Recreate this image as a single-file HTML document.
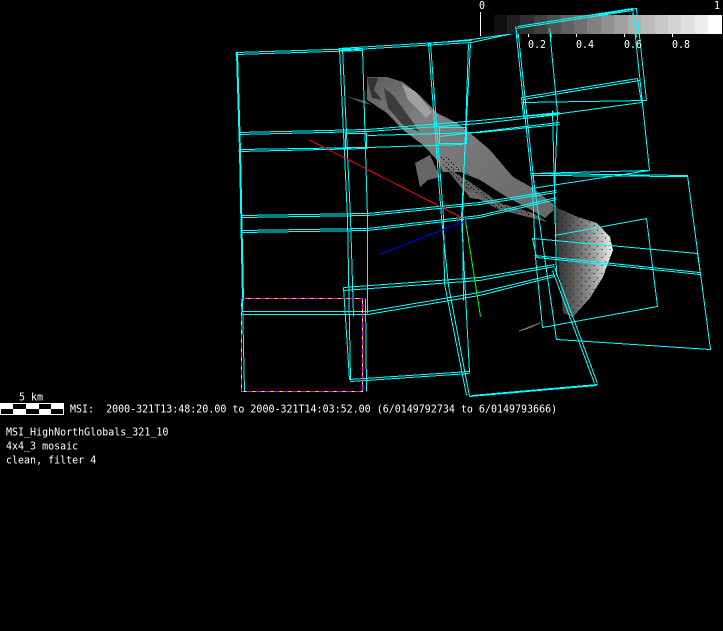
<!DOCTYPE html>
<html>
<head>
<meta charset="utf-8">
<style>
html,body{margin:0;padding:0;background:#000;width:723px;height:631px;overflow:hidden}
svg{display:block}
text{font-family:"DejaVu Sans Mono","Liberation Mono",monospace;font-size:10px;fill:#fff;white-space:pre}
</style>
</head>
<body>
<svg width="723" height="631" viewBox="0 0 723 631" xmlns="http://www.w3.org/2000/svg">
<defs>
<linearGradient id="b1" x1="0" y1="0" x2="1" y2="1">
<stop offset="0" stop-color="#5c5c5c"/><stop offset=".3" stop-color="#808080"/><stop offset=".6" stop-color="#747474"/><stop offset="1" stop-color="#666"/>
</linearGradient>
<linearGradient id="b2" x1="0" y1="0" x2="1" y2="0">
<stop offset="0" stop-color="#2a2a2a"/><stop offset=".3" stop-color="#555"/><stop offset=".6" stop-color="#8c8c8c"/><stop offset=".85" stop-color="#c8c8c8"/><stop offset="1" stop-color="#f4f4f4"/>
</linearGradient>
<pattern id="dots" width="8" height="8" patternUnits="userSpaceOnUse">
<rect x="1" y="1" width="2" height="1" fill="#000" fill-opacity=".45"/><rect x="5" y="5" width="1" height="2" fill="#000" fill-opacity=".45"/>
</pattern>
<pattern id="spk" width="5" height="5" patternUnits="userSpaceOnUse">
<rect x="1" y="2" width="1" height="1" fill="#000"/><rect x="3" y="4" width="1" height="1" fill="#000"/>
</pattern>
</defs>

<!-- asteroid -->
<g shape-rendering="crispEdges">
<path d="M367 77L387 77L403 82L417 93L437 113L457 123L470 133L490 150L513 177L533 188L557 207L545 218L533 211L505 196L480 180L460 172L443 172L437 160L423 145L403 130L387 113L367 100Z" fill="url(#b1)"/>
<path d="M443 165L470 182L500 203L533 213L548 222L500 210L465 192Z" fill="#5e5e5e"/>
<path d="M437 150L447 172L465 190L500 210L533 216L505 196L470 175Z" fill="url(#spk)"/>
<path d="M367 78L378 78L374 90L382 100L372 98Z" fill="#333"/>
<path d="M384 88L394 96L420 132L404 126L388 108Z" fill="#3c3c3c"/>
<path d="M402 84L416 92L432 112L426 118L408 100Z" fill="#a0a0a0"/>
<path d="M415 163L430 155L440 177L428 180L420 187Z" fill="#666"/>
<path d="M463 188L478 194L485 200L470 198Z" fill="#666"/>
<path d="M346 96L365 101L372 105L360 102Z" fill="#555"/>
<path d="M553 206L578 217L597 223L610 237L613 250L603 277L590 298L573 317L563 313L557 247Z" fill="url(#b2)"/>
<path d="M553 206L578 217L597 223L610 237L613 250L603 277L590 298L573 317L563 313L557 247Z" fill="url(#dots)"/>
<path d="M519 331L540 323L529 328Z" fill="#777" stroke="#777"/>
</g>

<!-- frames -->
<g transform="translate(-.5,.5)">
<g fill="none" stroke="#00ffff" stroke-width="1" shape-rendering="crispEdges">
<!-- top edges -->
<path d="M236 52L363 48M236 54L363 50M339 48L472 40M339 50L472 42M429 43L472 39L550 28M472 42L518 32"/>
<!-- band 2 -->
<path d="M239 132L368 129L480 120L560 112M239 134L368 131L480 123L560 114"/>
<path d="M239 149L368 147L463 144M239 151L368 148M368 135L480 132L560 124M440 136L560 122"/>
<!-- overlap boxes -->
<path d="M346 133H367V147H346ZM440 127H467V143H440Z"/>
<!-- band 3 -->
<path d="M242 215L368 213L480 202L557 190M242 217L368 215L480 204L557 192"/>
<path d="M242 230L368 228L480 215L557 197M242 232L368 230L480 217L557 199"/>
<!-- band 5 -->
<path d="M243 311L368 311L480 292L555 274M243 314L368 314L480 295L555 276"/>
<path d="M344 287L480 277L555 264M344 290L480 280L555 266"/>
<path d="M350 379L470 371M351 381L470 373"/>
<!-- verticals -->
<path d="M237 52L240 150L243 300L245 391M238 52L241 150L244 300"/>
<path d="M340 48L348 217L351 380M343 48L351 217L354 316"/>
<path d="M363 48L368 217L368 313M366 298L367 391"/>
<path d="M344 287L350 379"/>
<path d="M429 43L442 217L449 285L470 396M431 43L444 217L445 283L467 395"/>
<path d="M471 43L462 217L470 372M469 43L463 217L464 300"/>
<path d="M516 26L533 187L536 257L543 327M518 26L535 187"/>
<path d="M550 28L558 113L555 190L557 275M553 110L557 275"/>
<path d="M555 267L598 383M553 270L595 383M472 395L598 384M470 396L597 385"/>
<!-- top-right frames -->
<path d="M516 26L633 8L650 170M518 28L637 8L647 100"/>
<path d="M522 97L638 78L642 102M522 97L524 116L525 118L642 102M522 102L647 100M524 99L640 80"/>
<path d="M532 173L650 170M532 188L650 170M525 116L558 113"/>
<path d="M532 173L688 175L711 349L557 339L533 173M534 175L688 176"/>
<path d="M533 238L698 253M535 255L700 272M537 257L701 274M533 238L537 257M698 253L701 274"/>
<path d="M647 218L658 306L543 327M647 218L555 235"/>
</g>

<!-- selected image -->
<rect x="242" y="298" width="121" height="93" fill="none" stroke="#ffff00" shape-rendering="crispEdges"/>
<rect x="242" y="298" width="121" height="93" fill="none" stroke="#ff00ff" stroke-dasharray="6 3" shape-rendering="crispEdges"/>

<!-- axes -->
<g fill="none" stroke-width="1" shape-rendering="crispEdges">
<path d="M309 139L466 219" stroke="#ff0000"/>
<path d="M380 254L467 220" stroke="#0000ff"/>
<path d="M466 220L481 316" stroke="#00ff00"/>
</g>
</g>

<!-- colorbar -->
<g shape-rendering="crispEdges">
<rect x="494" y="15" width="14" height="19" fill="#101010"/>
<rect x="507" y="15" width="14" height="19" fill="#202020"/>
<rect x="520" y="15" width="14" height="19" fill="#303030"/>
<rect x="534" y="15" width="14" height="19" fill="#404040"/>
<rect x="547" y="15" width="14" height="19" fill="#505050"/>
<rect x="561" y="15" width="14" height="19" fill="#606060"/>
<rect x="574" y="15" width="14" height="19" fill="#707070"/>
<rect x="587" y="15" width="14" height="19" fill="#808080"/>
<rect x="601" y="15" width="14" height="19" fill="#909090"/>
<rect x="614" y="15" width="14" height="19" fill="#a0a0a0"/>
<rect x="628" y="15" width="14" height="19" fill="#b0b0b0"/>
<rect x="641" y="15" width="14" height="19" fill="#bbbbbb"/>
<rect x="655" y="15" width="14" height="19" fill="#c8c8c8"/>
<rect x="668" y="15" width="14" height="19" fill="#d4d4d4"/>
<rect x="681" y="15" width="14" height="19" fill="#e0e0e0"/>
<rect x="695" y="15" width="14" height="19" fill="#eeeeee"/>
<rect x="708" y="15" width="14" height="19" fill="#ffffff"/>
<rect x="480" y="12" width="1" height="24" fill="#fff"/>
<rect x="528" y="34" width="1" height="3" fill="#fff"/>
<rect x="576" y="34" width="1" height="3" fill="#fff"/>
<rect x="624" y="34" width="1" height="3" fill="#fff"/>
<rect x="672" y="34" width="1" height="3" fill="#fff"/>
</g>
<!-- re-draw frame edges over colorbar -->
<g fill="none" stroke="#00ffff" shape-rendering="crispEdges" transform="translate(-.5,.5)">
<path d="M518 26L633 8M516 28L633 10M633 8L637 37M637 8L640 37M516 26L518 37M550 28L552 37"/>
</g>
<text transform="translate(479,9) scale(1,1.1)">0</text>
<text transform="translate(714,9) scale(1,1.1)">1</text>
<text transform="translate(528,48) scale(1,1.1)">0.2</text>
<text transform="translate(576,48) scale(1,1.1)">0.4</text>
<text transform="translate(624,48) scale(1,1.1)">0.6</text>
<text transform="translate(672,48) scale(1,1.1)">0.8</text>

<!-- scale bar -->
<g shape-rendering="crispEdges">
<rect x="0" y="403" width="64" height="12" fill="#fff"/>
<rect x="13" y="404" width="13" height="5" fill="#000"/>
<rect x="39" y="404" width="12" height="5" fill="#000"/>
<rect x="1" y="409" width="12" height="5" fill="#000"/>
<rect x="26" y="409" width="13" height="5" fill="#000"/>
<rect x="51" y="409" width="12" height="5" fill="#000"/>
</g>
<text transform="translate(19,400.5) scale(1,1.1)">5 km</text>
<text transform="translate(70,412.5) scale(1,1.1)">MSI:  2000-321T13:48:20.00 to 2000-321T14:03:52.00 (6/0149792734 to 6/0149793666)</text>
<text transform="translate(6,435.5) scale(1,1.1)">MSI_HighNorthGlobals_321_10</text>
<text transform="translate(6,449.5) scale(1,1.1)">4x4_3 mosaic</text>
<text transform="translate(6,463.5) scale(1,1.1)">clean, filter 4</text>
</svg>
</body>
</html>
